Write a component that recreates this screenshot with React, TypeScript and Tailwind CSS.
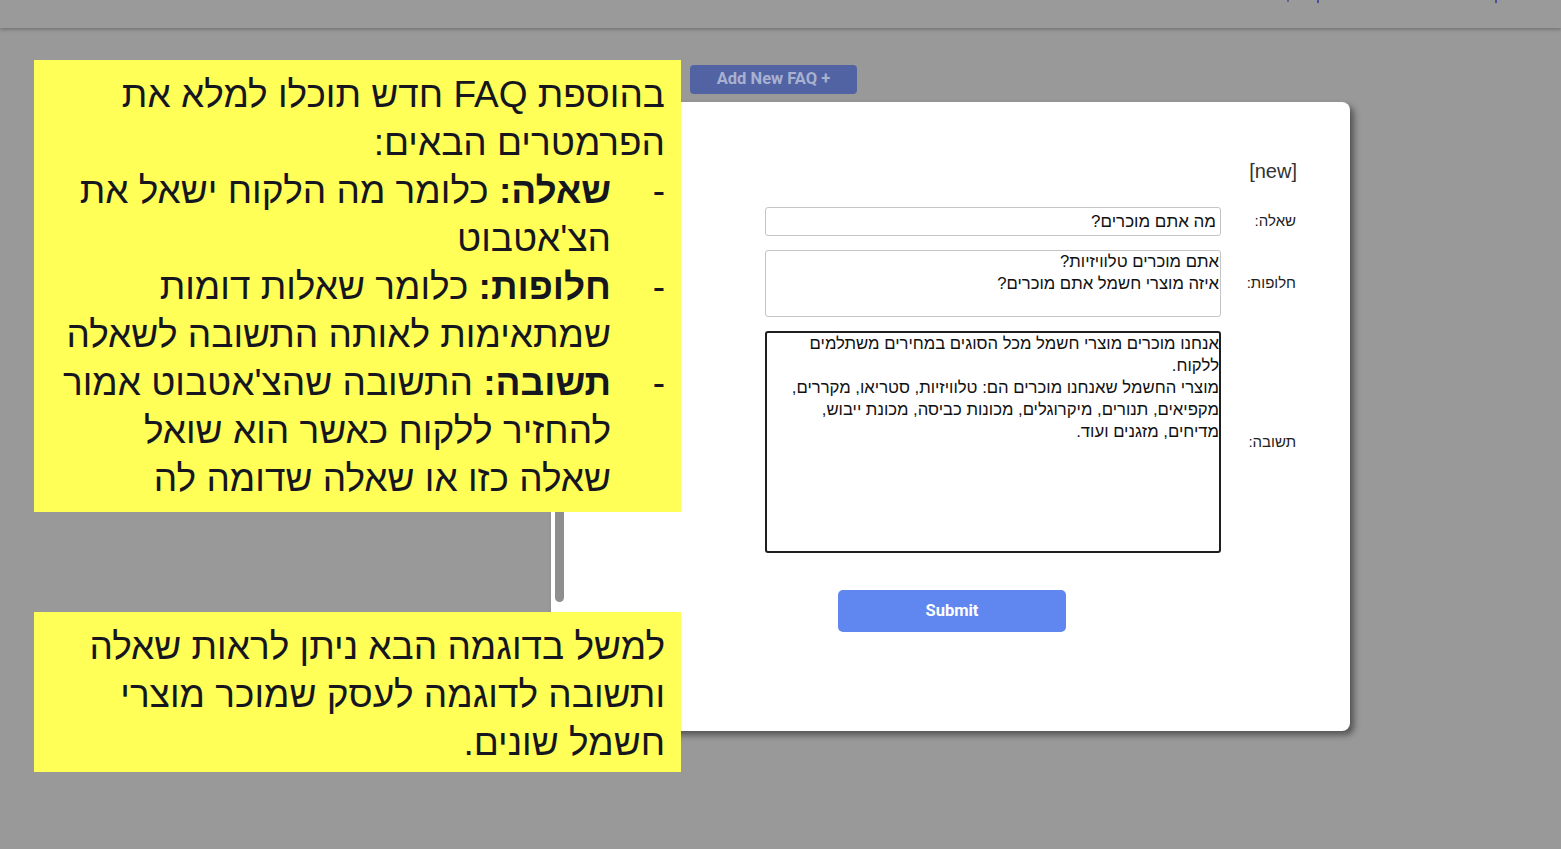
import React from "react";

const heb = { fontFamily: '"Liberation Sans", Arial, sans-serif' };
const ui = { fontFamily: 'Roboto, "Liberation Sans", sans-serif' };

const answerText = [
  "אנחנו מוכרים מוצרי חשמל מכל הסוגים במחירים משתלמים",
  "ללקוח.",
  "מוצרי החשמל שאנחנו מוכרים הם: טלוויזיות, סטריאו, מקררים,",
  "מקפיאים, תנורים, מיקרוגלים, מכונות כביסה, מכונת ייבוש,",
  "מדיחים, מזגנים ועוד.",
].join("\n");

function Bullet({ label, children }: { label: string; children: React.ReactNode }) {
  return (
    <div className="flex">
      <span className="w-[54px] shrink-0">-</span>
      <p className="flex-1">
        <b>{label}</b> {children}
      </p>
    </div>
  );
}

function FormRow({ label, children }: { label: string; children: React.ReactNode }) {
  return (
    <div className="flex items-center">
      <label className="w-[75px] shrink-0 text-[15px] text-[#222]">{label}</label>
      <div className="w-[456px]">{children}</div>
    </div>
  );
}

export default function App() {
  return (
    <div className="relative h-[849px] w-[1561px] overflow-hidden bg-[#999999]" style={heb}>
      {/* top bar */}
      <header className="relative z-10 h-[28px] bg-[#9a9a9a] shadow-[0_2px_3px_rgba(0,0,0,0.22)]">
        <div className="flex gap-[28px] pl-[1287px]">
          <span className="h-[2px] w-[2px] rounded-full bg-[#4a4f9a]" />
          <span className="h-[3px] w-[2px] bg-[#4a4f9a]" />
          <span className="ml-[148px] h-[3px] w-[2px] bg-[#4a4f9a]" />
        </div>
      </header>

      <main className="flex flex-col">
        <button
          className="ml-[690px] mt-[37px] h-[29px] w-[167px] rounded-[4px] bg-[#5163a3] text-[16.5px] font-bold text-[#a9b0d0]"
          style={ui}
        >
          Add New FAQ +
        </button>

        <section
          dir="rtl"
          className="relative ml-[551px] mt-[8px] h-[629px] w-[799px] rounded-[8px] bg-white pr-[53px] pt-[57px] shadow-[4px_4px_6px_rgba(0,0,0,0.45)]"
        >
          <div className="text-[20px] leading-[24px] text-[#333]">[new]</div>

          <div className="mt-[24px] flex flex-col gap-[14px] pr-[1px]">
            <FormRow label="שאלה:">
              <input
                readOnly
                value="מה אתם מוכרים?"
                className="block h-[29px] w-full rounded-[3px] border border-[#c4c4c4] px-[4px] text-[17px] text-[#111] outline-none"
                style={heb}
              />
            </FormRow>
            <FormRow label="חלופות:">
              <textarea
                readOnly
                wrap="off"
                value={"אתם מוכרים טלוויזיות?\nאיזה מוצרי חשמל אתם מוכרים?"}
                className="block h-[67px] w-full resize-none overflow-hidden rounded-[3px] border border-[#c4c4c4] px-[1px] text-[16.7px] leading-[22px] text-[#111] outline-none"
                style={heb}
              />
            </FormRow>
            <FormRow label="תשובה:">
              <textarea
                readOnly
                wrap="off"
                value={answerText}
                className="block h-[222px] w-full resize-none overflow-hidden rounded-[3px] border-2 border-[#1f1f1f] px-[0px] text-[16.7px] leading-[22px] text-[#111] outline-none"
                style={heb}
              />
            </FormRow>
          </div>

          <div className="mt-[37px] flex">
            <button
              className="mr-[231px] h-[42px] w-[228px] rounded-[5px] bg-[#6087f0] text-[16.5px] font-bold text-white"
              style={ui}
            >
              Submit
            </button>
          </div>

          {/* scrollbar thumb (rtl, left side) */}
          <span className="absolute left-[4px] top-[300px] h-[200px] w-[9px] rounded-full bg-[#8e8e8e]" />
        </section>
      </main>

      {/* annotation callouts */}
      <div
        dir="rtl"
        className="absolute left-[34px] top-[60px] h-[452px] w-[647px] bg-[#ffff57] pl-[8px] pr-[16px] pt-[11px] text-[37px] leading-[48px] text-[#16161f]"
      >
        <p>בהוספת FAQ חדש תוכלו למלא את הפרמטרים הבאים:</p>
        <Bullet label="שאלה:">כלומר מה הלקוח ישאל את הצ'אטבוט</Bullet>
        <Bullet label="חלופות:">כלומר שאלות דומות שמתאימות לאותה התשובה לשאלה</Bullet>
        <Bullet label="תשובה:">התשובה שהצ'אטבוט אמור להחזיר ללקוח כאשר הוא שואל שאלה כזו או שאלה שדומה לה</Bullet>
      </div>

      <div
        dir="rtl"
        className="absolute left-[34px] top-[612px] h-[160px] w-[647px] bg-[#ffff57] pl-[8px] pr-[16px] pt-[11px] text-[37px] leading-[48px] text-[#16161f]"
      >
        <p>למשל בדוגמה הבא ניתן לראות שאלה ותשובה לדוגמה לעסק שמוכר מוצרי חשמל שונים.</p>
      </div>
    </div>
  );
}
